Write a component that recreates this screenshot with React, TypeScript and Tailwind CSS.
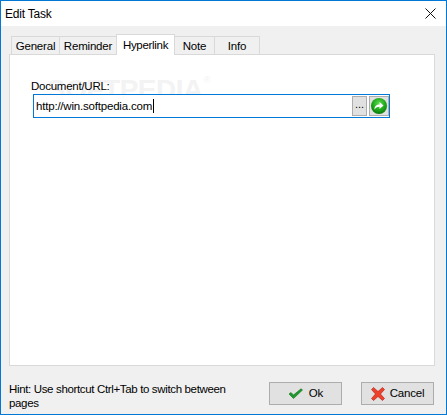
const TABS = [
  { label: "General", width: "w-[49px]" },
  { label: "Reminder", width: "w-[58px]" },
  { label: "Hyperlink", width: "w-[59px]", active: true },
  { label: "Note", width: "w-[41px]" },
  { label: "Info", width: "w-[46px]" },
];

function TabStrip() {
  return (
    <div className="flex h-[20px] items-end pl-[2px]">
      {TABS.map((tab) =>
        tab.active ? (
          <div
            key={tab.label}
            className={`relative z-10 -mb-px -mr-px flex h-[21px] ${tab.width} items-start justify-center border border-b-0 border-[#d9d9d9] bg-white pt-[3px] text-[11.5px] leading-[14px] tracking-[-0.3px]`}
          >
            {tab.label}
          </div>
        ) : (
          <div
            key={tab.label}
            className={`-mr-px flex h-[18px] ${tab.width} items-start justify-center border border-b-0 border-[#d9d9d9] bg-[#f0f0f0] pt-[2px] text-[11.5px] leading-[14px] tracking-[-0.2px]`}
          >
            {tab.label}
          </div>
        ),
      )}
    </div>
  );
}

function GoIcon() {
  return (
    <svg width="16" height="16" viewBox="0 0 16 16">
      <defs>
        <radialGradient id="go" cx="50%" cy="35%" r="65%">
          <stop offset="0%" stopColor="#5fdc50" />
          <stop offset="60%" stopColor="#1fa81c" />
          <stop offset="100%" stopColor="#0a7a0c" />
        </radialGradient>
      </defs>
      <circle cx="8" cy="8" r="8" fill="url(#go)" />
      <path d="M3.500 11.500c0-3.500 2-5 5-5V4l4 3.500-4 3.500V8.800c-2 0-3.500.7-5 2.700z" fill="#fff" />
    </svg>
  );
}

function CheckIcon() {
  return (
    <svg width="15" height="11" viewBox="0 0 15 11">
      <path d="M1 6l2-1.500 2.500 2.500L13 .8l1.500 1.200L5.500 10.500z" fill="#1f9a2c" stroke="#0f6e1c" strokeWidth="0.6" />
    </svg>
  );
}

function CrossIcon() {
  return (
    <svg width="14" height="14" viewBox="0 0 14 14">
      <path
        d="M2.500.5L7 4.500 11.500.5l2 2L9.500 7l4 4.500-2 2L7 9.500l-4.500 4-2-2L4.500 7l-4-4.500z"
        fill="#f0402a"
        stroke="#a81c10"
        strokeWidth="0.6"
      />
    </svg>
  );
}

export default function App() {
  return (
    <div
      className="flex h-[415px] w-[447px] flex-col border border-[#0078d7] bg-[#f0f0f0] text-[11.5px] text-[#000]"
      style={{ fontFamily: '"Liberation Sans", Arial, sans-serif' }}
    >
      <div className="flex h-[25px] shrink-0 items-center justify-between bg-white pl-[4px] pr-[10px]">
        <span className="text-[12px] tracking-[-0.2px]">Edit Task</span>
        <svg width="11" height="11" viewBox="0 0 11 11">
          <path d="M.5.500l10 10M10.500.500l-10 10" stroke="#111" strokeWidth="1" />
        </svg>
      </div>

      <div className="flex flex-1 flex-col pl-[8px] pr-[11px] pt-[8px]">
        <TabStrip />
        <div className="relative h-[312px] border border-[#d9d9d9] bg-white pl-[23px] pr-[44px] pt-[24px]">
          <div className="pointer-events-none absolute left-[37px] top-[21px] text-[28px] font-bold leading-none tracking-[-0.5px] text-[#f3f3f3]">
            SOFTPEDIA
            <span className="ml-px align-top text-[9px] font-normal">®</span>
          </div>
          <div className="relative ml-[-2px] text-[11.5px] leading-[14px] tracking-[-0.25px]">Document/URL:</div>
          <div className="relative mt-[1px] flex h-[24px] items-center justify-between border border-[#0078d7] bg-white pl-[2px]">
            <span className="border-r border-[#000] pr-px text-[11.5px] leading-[14px] tracking-[-0.2px]">
              http://win.softpedia.com
            </span>
            <div className="flex items-center gap-[2px]">
              <div className="flex h-[20px] w-[15px] items-center justify-center border border-[#adadad] bg-[#e1e1e1] pb-[3px] text-[11px] leading-none">
                ...
              </div>
              <div className="flex h-[20px] w-[20px] items-center justify-center border border-[#adadad] bg-[#e1e1e1]">
                <GoIcon />
              </div>
            </div>
          </div>
        </div>

        <div className="flex flex-1 items-start justify-between pt-[12px]">
          <p className="mt-[4px] w-[236px] text-[11.5px] leading-[14px] tracking-[-0.35px]">
            Hint: Use shortcut Ctrl+Tab to switch between pages
          </p>
          <div className="mr-[1px] flex gap-[19px] pt-[4px]">
            <button className="flex h-[23px] w-[73px] items-center justify-center gap-[6px] border border-[#adadad] bg-[#e1e1e1] text-[11.5px] tracking-[-0.2px]">
              <CheckIcon />
              Ok
            </button>
            <button className="flex h-[23px] w-[73px] items-center justify-center gap-[5px] border border-[#adadad] bg-[#e1e1e1] text-[11.5px] tracking-[-0.2px]">
              <CrossIcon />
              Cancel
            </button>
          </div>
        </div>
      </div>
    </div>
  );
}
